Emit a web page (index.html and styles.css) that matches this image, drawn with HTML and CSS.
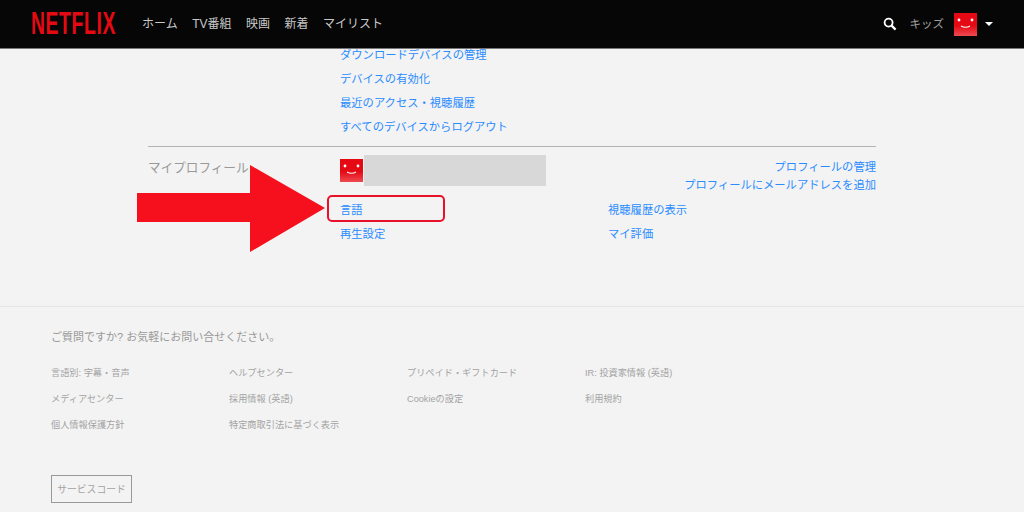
FILE: index.html
```html
<!DOCTYPE html>
<html lang="ja">
<head>
<meta charset="utf-8">
<title>アカウント</title>
<link rel="stylesheet" href="styles.css">
</head>
<body>
<header class="topbar">
  <div class="logo"><span class="logo-text">NETFLIX</span></div>
  <nav class="nav">
    <a>ホーム</a><a>TV番組</a><a>映画</a><a>新着</a><a>マイリスト</a>
  </nav>
  <div class="top-right">
    <svg class="search" viewBox="0 0 14 14" width="14" height="14"><circle cx="5.6" cy="5.6" r="4" fill="none" stroke="#fff" stroke-width="1.8"/><path d="M8.600 8.600 L12.600 12.600" stroke="#fff" stroke-width="2.200"/></svg>
    <span class="kids">キッズ</span>
    <svg class="avatar" viewBox="0 0 23 23" width="23" height="23"><use href="#face"/></svg>
    <span class="caret"></span>
  </div>
</header>

<svg class="defs" width="0" height="0">
  <defs>
    <linearGradient id="red" x1="0" y1="0" x2="0" y2="1"><stop offset="0" stop-color="#e50914"/><stop offset=".55" stop-color="#e50914"/><stop offset="1" stop-color="#ee4a52"/></linearGradient>
    <g id="face"><rect width="23" height="23" fill="url(#red)"/><circle cx="5" cy="7" r="1.4" fill="#fff"/><circle cx="18" cy="7" r="1.4" fill="#fff"/><path d="M7 13 Q11.500 15.500 16 13" fill="none" stroke="#fff" stroke-width="1.100"/></g>
  </defs>
</svg>

<main class="account">
  <section class="device-links">
    <a>ダウンロードデバイスの管理</a>
    <a>デバイスの有効化</a>
    <a>最近のアクセス・視聴履歴</a>
    <a>すべてのデバイスからログアウト</a>
  </section>
  <section class="profile">
    <h2 class="profile-title">マイプロフィール</h2>
    <div class="profile-body">
      <div class="profile-head">
        <div class="profile-id">
          <svg class="avatar" viewBox="0 0 23 23" width="23" height="23"><use href="#face"/></svg>
          <div class="redacted"></div>
        </div>
        <div class="profile-manage">
          <a>プロフィールの管理</a>
          <a>プロフィールにメールアドレスを追加</a>
        </div>
      </div>
      <div class="settings">
        <a>言語</a><a>視聴履歴の表示</a>
        <a>再生設定</a><a>マイ評価</a>
      </div>
    </div>
  </section>
</main>

<footer class="footer">
  <p class="footer-q">ご質問ですか? お気軽にお問い合せください。</p>
  <div class="footer-links">
    <a>言語別: 字幕・音声</a><a>ヘルプセンター</a><a>プリペイド・ギフトカード</a><a>IR: 投資家情報 (英語)</a>
    <a>メディアセンター</a><a>採用情報 (英語)</a><a>Cookieの設定</a><a>利用規約</a>
    <a>個人情報保護方針</a><a>特定商取引法に基づく表示</a>
  </div>
  <button class="service-code">サービスコード</button>
</footer>

<svg class="arrow" viewBox="0 0 188 87" width="188" height="87"><path d="M0 28 H113 V0 L188 43 L113 87 V57 H0 Z" fill="#f6101e"/></svg>
<div class="highlight"></div>
</body>
</html>
```
FILE: styles.css
```css
* { box-sizing: border-box; }
html, body { margin: 0; height: 512px; overflow: hidden; }
body {
  position: relative;
  background: #f3f3f3;
  font-family: "Liberation Sans", "Noto Sans CJK JP", sans-serif;
  color: #2a8cff;
}
a { display: block; }
.defs { position: absolute; }

.topbar {
  position: absolute;
  inset: 0 0 auto 0;
  height: 49px;
  background: #060606;
  border-bottom: 1px solid #777;
  display: flex;
  align-items: center;
  padding: 0 31px;
}
.logo { width: 111px; padding-bottom: 3px; }
.logo-text {
  display: block;
  font: 700 32px/32px "Liberation Sans", sans-serif;
  color: #e50914;
  letter-spacing: 1px;
  transform-origin: left center;
  transform: scaleX(.605);
}
.nav { display: flex; gap: 14.500px; font-size: 12px; color: #c8c8c8; padding-bottom: 3px; }
.top-right { margin-left: auto; display: flex; align-items: center; color: #a0a0a0; font-size: 11.500px; }
.search { margin-right: 12px; }
.kids { margin-right: 10px; padding-left: 1px; padding-bottom: 2px; }
.avatar { display: block; }
.caret {
  margin-left: 8px;
  border: 4px solid transparent;
  border-top: 4px solid #fff;
  border-bottom: 0;
}

.account { padding: 49px 148px 0; height: 306px; }
.device-links { padding-left: 192px; font-size: 11.300px; height: 98px; border-bottom: 1px solid #b3b3b3; }
.device-links a { height: 24px; line-height: 12px; }
.profile { display: flex; padding-top: 8px; }
.profile-title { margin: 4px 0 0; width: 192px; font-weight: 400; font-size: 12.600px; line-height: 18px; color: #999; }
.profile-body { flex: 1; }
.profile-head { display: flex; justify-content: space-between; font-size: 11.300px; }
.profile-id { display: flex; align-items: flex-start; gap: 1px; }
.profile-id .avatar { margin-top: 4px; }
.redacted { width: 182px; height: 31px; background: #d8d8d8; }
.profile-manage { text-align: right; line-height: 18px; padding-top: 3px; }
.settings {
  margin-top: 9px;
  display: grid;
  grid-template-columns: 268px 1fr;
  row-gap: 10px;
  font-size: 11.300px;
  line-height: 14px;
}

.footer { border-top: 1px solid #e6e6e6; height: 206px; padding: 23px 0 0 51px; color: #999; }
.footer-q { margin: 0; font-size: 11px; line-height: 14px; }
.footer-links {
  margin-top: 22px;
  display: grid;
  grid-template-columns: repeat(4, 178px);
  grid-auto-rows: 26px;
  font-size: 9.200px;
  line-height: 14px;
  color: #a3a3a3;
}
.service-code {
  display: block;
  margin-top: 31px;
  width: 81px;
  height: 28px;
  padding: 0;
  background: transparent;
  border: 1px solid #999;
  font: 9.800px "Liberation Sans", "Noto Sans CJK JP", sans-serif;
  color: #a3a3a3;
}

.arrow { position: absolute; left: 137px; top: 165px; }
.highlight {
  position: absolute;
  left: 327px;
  top: 195px;
  width: 118px;
  height: 27px;
  border: 2px solid #e8102a;
  border-radius: 5px;
}
```
